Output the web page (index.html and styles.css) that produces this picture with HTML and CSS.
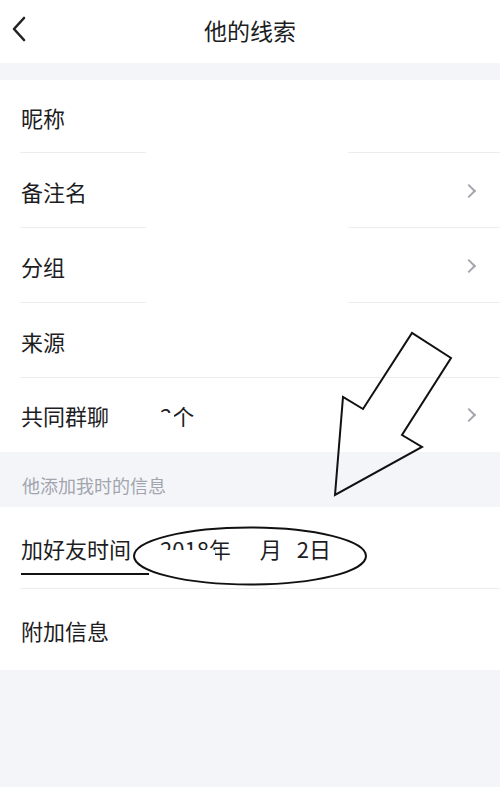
FILE: index.html
```html
<!DOCTYPE html>
<html lang="zh-CN">
  <head>
    <meta charset="UTF-8" />
    <meta name="viewport" content="width=device-width, initial-scale=1.0" />
    <title>他的线索</title>
    <link rel="stylesheet" href="styles.css">
  </head>

  <body>
    <header class="topbar">
      <span class="back">
        <svg width="16" height="26" viewBox="0 0 16 26">
          <polyline points="13,2 3,13 13,24" fill="none" stroke="#222" stroke-width="2.6" stroke-linecap="round" stroke-linejoin="round" />
        </svg>
      </span>
      <h1>他的线索</h1>
    </header>

    <div class="spacer"></div>

    <ul class="list">
      <li class="item first redacted">
        <span class="label">昵称</span>
      </li>
      <li class="item redacted">
        <span class="label">备注名</span>
        <span class="chevron"></span>
      </li>
      <li class="item redacted">
        <span class="label">分组</span>
        <span class="chevron"></span>
      </li>
      <li class="item">
        <span class="label">来源</span>
      </li>
      <li class="item last">
        <span class="label">共同群聊</span>
        <span class="value">2个</span>
        <span class="chevron"></span>
      </li>
    </ul>

    <div class="section-title">他添加我时的信息</div>

    <ul class="list">
      <li class="item tall">
        <span class="label">加好友时间</span>
        <span class="value">2018年<span class="month">月</span><span class="day">2日</span></span>
      </li>
      <li class="item tall last">
        <span class="label">附加信息</span>
      </li>
    </ul>

    <!-- marks drawn over the screenshot -->
    <svg class="marks" width="500" height="787" viewBox="0 0 500 787">
      <rect x="154" y="413" width="20" height="16" fill="#fff" />
      <rect x="157" y="550" width="58" height="16" fill="#fff" />
      <polygon points="335,495 343,397 363,409 412,333 451,358 402,435 422,447"
        fill="none" stroke="#111" stroke-width="2" stroke-linejoin="miter" />
      <ellipse cx="250" cy="556" rx="116" ry="28.5" fill="none" stroke="#111" stroke-width="2" />
      <line x1="21" y1="574" x2="149" y2="574" stroke="#111" stroke-width="2" />
    </svg>
  </body>
</html>
```

FILE: styles.css
```css
:root {
  --text-color: #1d1d1f;
  --muted-color: #a2a5ae;
  --page-bg: #f4f5f9;
  --line-color: #ededf0;
  --chevron-color: #a4a6ad;
}

* {
  box-sizing: border-box;
  margin: 0;
  padding: 0;
  font-family: "Noto Sans CJK SC", "Noto Sans", sans-serif;
}

body {
  background-color: var(--page-bg);
  color: var(--text-color);
  position: relative;
  min-height: 787px;
  width: 500px;
}

.topbar {
  height: 63px;
  background: white;
  display: flex;
  align-items: center;
  justify-content: center;
  position: relative;
}

.topbar h1 {
  font-size: 23px;
  font-weight: 400;
  margin-top: -3px;
}

.back {
  position: absolute;
  left: 11px;
  top: 16px;
}

.spacer {
  height: 17px;
}

.list {
  list-style: none;
  background: white;
}

.item {
  height: 75px;
  display: grid;
  grid-template-columns: 139px 1fr auto;
  align-items: center;
  padding-left: 21px;
  font-size: 22px;
  line-height: 1;
  position: relative;
  background:
    linear-gradient(var(--line-color), var(--line-color)) 20px 100% / 480px 1px no-repeat,
    white;
}

.item.first {
  height: 73px;
}

.item.redacted {
  background:
    linear-gradient(to right,
      var(--line-color) 0, var(--line-color) 126px,
      transparent 126px, transparent 328px,
      var(--line-color) 328px) 20px 100% / 480px 1px no-repeat,
    white;
}

.item.last {
  background: white;
  height: 74px;
}

.item.tall {
  height: 82px;
}

.item.tall.last {
  height: 81px;
}

.label {
  grid-column: 1;
}

.value {
  grid-column: 2;
  white-space: nowrap;
}

.month {
  margin-left: 29px;
}

.day {
  margin-left: 15px;
}

.chevron {
  grid-column: 3;
  width: 10px;
  height: 10px;
  border-top: 2px solid var(--chevron-color);
  border-right: 2px solid var(--chevron-color);
  transform: rotate(45deg);
  margin-right: 26px;
}

.section-title {
  height: 55px;
  padding: 21px 0 0 22px;
  font-size: 18px;
  line-height: 24px;
  color: var(--muted-color);
}

.marks {
  position: absolute;
  top: 0;
  left: 0;
  pointer-events: none;
}
```
